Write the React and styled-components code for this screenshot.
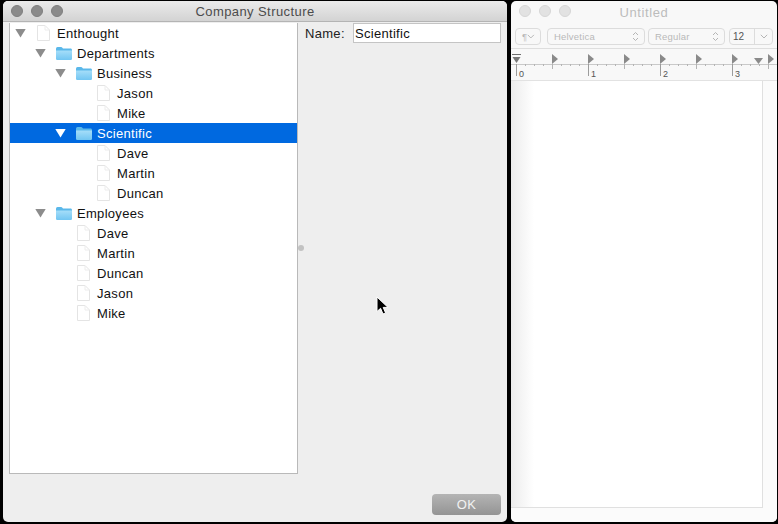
import React from 'react'
import styled, { createGlobalStyle } from 'styled-components'

const GlobalStyle = createGlobalStyle`
  html, body { margin: 0; padding: 0; background: #000; }
  * { box-sizing: border-box; }
  body { font-family: "Liberation Sans", Arial, sans-serif; }
`

const tree = [
  { name: 'Enthought', icon: 'page', open: true, children: [
    { name: 'Departments', icon: 'folder', open: true, children: [
      { name: 'Business', icon: 'folder', open: true, children: [
        { name: 'Jason', icon: 'page' },
        { name: 'Mike', icon: 'page' },
      ] },
      { name: 'Scientific', icon: 'folder', open: true, selected: true, children: [
        { name: 'Dave', icon: 'page' },
        { name: 'Martin', icon: 'page' },
        { name: 'Duncan', icon: 'page' },
      ] },
    ] },
    { name: 'Employees', icon: 'folder', open: true, children: [
      { name: 'Dave', icon: 'page' },
      { name: 'Martin', icon: 'page' },
      { name: 'Duncan', icon: 'page' },
      { name: 'Jason', icon: 'page' },
      { name: 'Mike', icon: 'page' },
    ] },
  ] },
]

// flatten so the rows can just be mapped
const flatten = (nodes, depth = 0) =>
  nodes.flatMap((n) => [{ ...n, depth }, ...(n.children ? flatten(n.children, depth + 1) : [])])

function PageIcon() {
  return (
    <svg width="13" height="16" viewBox="0 0 13 16">
      <path d="M0.5 0.5H8L12.5 5V15.5H0.5Z" fill="#fff" stroke="#e4e4e4" />
      <path d="M8 0.5V5H12.5" fill="none" stroke="#ececec" />
    </svg>
  )
}

function FolderIcon({ id }) {
  return (
    <svg width="16" height="13" viewBox="0 0 16 13">
      <defs>
        <linearGradient id={id} x1="0" y1="0" x2="0" y2="1">
          <stop offset="0" stopColor="#a6def9" />
          <stop offset="1" stopColor="#72c6f2" />
        </linearGradient>
      </defs>
      <path d="M0 2C0 0.8 0.6 0 1.6 0H5.2C6 0 6.4 0.8 7 1.4H14.4C15.4 1.4 16 2 16 3V4H0Z" fill="#5ab8ea" />
      <path d="M0 3.4H16V11.4C16 12.4 15.4 13 14.4 13H1.6C0.6 13 0 12.4 0 11.4Z" fill={`url(#${id})`} />
    </svg>
  )
}

function Cursor() {
  return (
    <svg width="14" height="20" viewBox="0 0 14 20">
      <path d="M1 1V15.5L4.6 12.3L7 18L9.6 16.9L7.2 11.4H12Z" fill="#000" stroke="#fff" strokeWidth="1" />
    </svg>
  )
}

function UpDown() {
  return (
    <svg width="7" height="11" viewBox="0 0 7 11">
      <path d="M1 4L3.5 1.5L6 4M1 7L3.5 9.5L6 7" fill="none" stroke="#b5b5b5" strokeWidth="1" />
    </svg>
  )
}

function Chevron() {
  return (
    <svg width="8" height="5" viewBox="0 0 8 5">
      <path d="M0.8 0.8L4 4L7.2 0.8" fill="none" stroke="#b5b5b5" strokeWidth="1" />
    </svg>
  )
}

function Ruler() {
  const ticks = []
  for (let i = 0; i < 30; i++) {
    const x = 5.5 + i * 9
    const major = i % 8 === 0
    const mid = i % 4 === 0
    ticks.push(<line key={i} x1={x} x2={x} y1={15} y2={major ? 27 : mid ? 20 : 17} stroke={major ? '#9c9c9c' : '#b4b4b4'} />)
  }
  const tabs = [41, 77, 113, 149, 185, 221, 257]
  return (
    <svg width="267" height="31" viewBox="0 0 267 31">
      <line x1="0" x2="267" y1="15.5" y2="15.5" stroke="#c9c9c9" />
      {ticks}
      {tabs.map((x) => <path key={x} d={`M${x} 5L${x + 6} 10L${x} 15Z`} fill="#8a8a8a" />)}
      <path d="M1 5.5H10" stroke="#6e6e6e" strokeWidth="1" />
      <path d="M1.5 8H9.5L5.5 14Z" fill="#777" />
      <path d="M243 9H252L247.5 15Z" fill="#8a8a8a" />
      {[0, 1, 2, 3].map((n) => <text key={n} x={8 + n * 72} y="28" fontSize="9" fill="#555" fontFamily="Liberation Sans, sans-serif">{n}</text>)}
    </svg>
  )
}

export default function App() {
  const rows = flatten(tree)
  return (
    <>
      <GlobalStyle />
      <Desktop>
        <MainWindow>
          <TitleBar>
            <Lights>
              <Light /><Light /><Light />
            </Lights>
            Company Structure
          </TitleBar>
          <Body>
            <TreePane>
              {rows.map((r, i) => (
                <Row key={i} $depth={r.depth} $selected={r.selected}>
                  <Disclosure $open={r.open} $selected={r.selected} />
                  <IconCell>{r.icon === 'folder' ? <FolderIcon id={`folder-${i}`} /> : <PageIcon />}</IconCell>
                  {r.name}
                </Row>
              ))}
            </TreePane>
            <Splitter><Grip /></Splitter>
            <Detail>
              <NameRow>
                <NameLabel>Name:</NameLabel>
                <NameInput readOnly value="Scientific" />
              </NameRow>
            </Detail>
          </Body>
          <Footer>
            <OkButton>OK</OkButton>
          </Footer>
          <CursorSpot><Cursor /></CursorSpot>
        </MainWindow>

        <EditorWindow>
          <EditorTitle>
            <Lights>
              <Light $ghost /><Light $ghost /><Light $ghost />
            </Lights>
            Untitled
          </EditorTitle>
          <Toolbar>
            <Popup $w={26}><span>¶</span><Chevron /></Popup>
            <Popup $w={98} $ml={6}><span>Helvetica</span><UpDown /></Popup>
            <Popup $w={77} $ml={3}><span>Regular</span><UpDown /></Popup>
            <SizeBox>
              <SizeValue>12</SizeValue>
              <SizeArrow><Chevron /></SizeArrow>
            </SizeBox>
          </Toolbar>
          <RulerBar><Ruler /></RulerBar>
          <DocArea>
            <DocPage />
          </DocArea>
        </EditorWindow>
      </Desktop>
    </>
  )
}

const Desktop = styled.div`
  width: 778px;
  height: 524px;
  background: #000;
  display: flex;
  padding: 1px 1px 2px 3px;
  gap: 4px;
  overflow: hidden;
`

const MainWindow = styled.div`
  position: relative;
  width: 504px;
  display: flex;
  flex-direction: column;
  background: #eeeeee;
  border-radius: 5px;
  overflow: hidden;
`

const TitleBar = styled.div`
  position: relative;
  height: 21px;
  flex: none;
  display: flex;
  align-items: center;
  justify-content: center;
  background: linear-gradient(#ebebeb, #d3d3d3);
  border-bottom: 1px solid #b4b4b4;
  font-size: 13px;
  letter-spacing: 0.42px;
  color: #4c4c4c;
`

const Lights = styled.div`
  position: absolute;
  left: 8px;
  top: 4px;
  display: flex;
  gap: 8px;
`

const Light = styled.span`
  width: 12px;
  height: 12px;
  border-radius: 50%;
  background: ${(p) => (p.$ghost ? '#e2e2e2' : '#8b8b8b')};
  border: 1px solid ${(p) => (p.$ghost ? '#d6d6d6' : '#7f7f7f')};
`

const Body = styled.div`
  flex: 1;
  display: flex;
  min-height: 0;
  padding-left: 6px;
  padding-top: 1px;
`

const TreePane = styled.div`
  width: 289px;
  height: 451px;
  flex: none;
  background: #fff;
  border: 1px solid #b9b9b9;
  border-top: none;
`

const Row = styled.div`
  height: 20px;
  display: flex;
  align-items: center;
  padding-left: ${(p) => 5 + p.$depth * 20}px;
  font-size: 13px;
  letter-spacing: 0.3px;
  color: ${(p) => (p.$selected ? '#fff' : '#111')};
  background: ${(p) => (p.$selected ? '#0069e0' : 'transparent')};
`

const Disclosure = styled.span`
  width: 11px;
  height: 9px;
  flex: none;
  margin-right: 9px;
  clip-path: polygon(0 0, 100% 0, 50% 100%);
  background: ${(p) => (!p.$open ? 'transparent' : p.$selected ? '#fff' : '#8c8c8c')};
`

const IconCell = styled.span`
  width: 17px;
  flex: none;
  margin-right: 5px;
  display: flex;
  justify-content: center;
`

const Splitter = styled.div`
  width: 6px;
  flex: none;
  height: 451px;
  display: flex;
  align-items: center;
  justify-content: center;
`

const Grip = styled.span`
  width: 6px;
  height: 6px;
  border-radius: 50%;
  background: #c2c2c2;
  margin-top: -1px;
`

const Detail = styled.div`
  flex: 1;
  padding-right: 6px;
`

const NameRow = styled.div`
  display: flex;
  align-items: center;
  height: 20px;
  padding-left: 1px;
`

const NameLabel = styled.span`
  width: 48px;
  font-size: 13px;
  letter-spacing: 0.3px;
  color: #222;
`

const NameInput = styled.input`
  width: 148px;
  height: 20px;
  border: 1px solid #c4c4c4;
  background: #fff;
  padding: 0 1px;
  outline: none;
  font: 13px "Liberation Sans", Arial, sans-serif;
  letter-spacing: 0.3px;
  color: #111;
`

const Footer = styled.div`
  flex: none;
  height: 28px;
  display: flex;
  justify-content: flex-end;
  align-items: flex-start;
  padding-right: 6px;
`

const OkButton = styled.div`
  width: 69px;
  height: 21px;
  border-radius: 4px;
  background: linear-gradient(#b4b4b4, #949494);
  color: #f2f2f2;
  font-size: 13px;
  letter-spacing: 0.4px;
  display: flex;
  align-items: center;
  justify-content: center;
`

const CursorSpot = styled.div`
  position: absolute;
  left: 373px;
  top: 295px;
  line-height: 0;
`

const EditorWindow = styled.div`
  flex: 1;
  display: flex;
  flex-direction: column;
  background: #f8f8f8;
  border-radius: 5px;
  overflow: hidden;
`

const EditorTitle = styled.div`
  position: relative;
  height: 23px;
  margin-bottom: 1px;
  flex: none;
  display: flex;
  align-items: center;
  justify-content: center;
  font-size: 13px;
  letter-spacing: 0.6px;
  color: #bcbcbc;
`

const Toolbar = styled.div`
  height: 24px;
  flex: none;
  display: flex;
  align-items: flex-start;
  padding: 3px 0 0 4px;
  border-bottom: 1px solid #dedede;
`

const Popup = styled.div`
  width: ${(p) => p.$w}px;
  margin-left: ${(p) => p.$ml || 0}px;
  height: 17px;
  flex: none;
  display: flex;
  align-items: center;
  justify-content: space-between;
  padding: 0 5px 0 6px;
  border: 1px solid #dcdcdc;
  border-radius: 4px;
  font-size: 9.5px;
  letter-spacing: 0.2px;
  color: #b8b8b8;
`

const SizeBox = styled.div`
  width: 44px;
  height: 17px;
  margin-left: 4px;
  flex: none;
  display: flex;
  border: 1px solid #dcdcdc;
  border-radius: 4px;
`

const SizeValue = styled.span`
  width: 25px;
  padding-left: 3px;
  border-right: 1px solid #dcdcdc;
  font-size: 10px;
  line-height: 15px;
  color: #555;
`

const SizeArrow = styled.span`
  flex: 1;
  display: flex;
  align-items: center;
  justify-content: center;
`

const RulerBar = styled.div`
  height: 32px;
  flex: none;
  line-height: 0;
  border-bottom: 1px solid #e2e2e2;
`

const DocArea = styled.div`
  flex: 1;
  padding-right: 14px;
  padding-bottom: 14px;
  background: #fbfbfb;
`

const DocPage = styled.div`
  height: 100%;
  border-right: 1px solid #e0e0e0;
  border-bottom: 1px solid #e0e0e0;
  background: linear-gradient(90deg, #ececec 0, #fff 23px);
`
